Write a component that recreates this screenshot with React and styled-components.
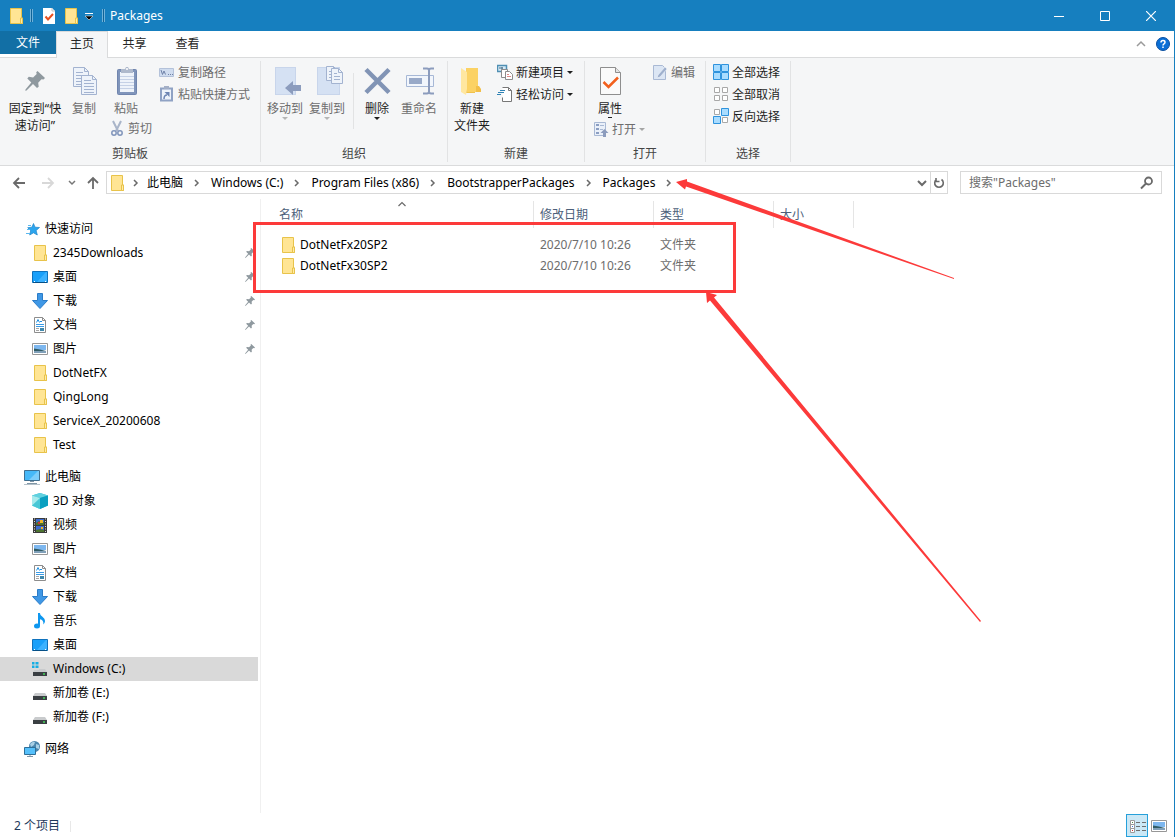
import React from "react"
import styled, { createGlobalStyle, css } from "styled-components"

const GlobalStyle = createGlobalStyle`
  * {
    box-sizing: border-box;
  }
  body {
    margin: 0;
    background: #fff;
  }
  body,
  button,
  input {
    font-family: "Noto Sans", "Noto Sans CJK SC", sans-serif;
    font-size: 12px;
    line-height: 17px;
  }
  button {
    margin: 0;
    padding: 0;
    border: 0;
    background: none;
    color: inherit;
  }
  svg {
    display: block;
    flex: none;
  }
`

const Window = styled.div`
  position: relative;
  display: flex;
  flex-direction: column;
  min-height: 100vh;
  color: #000;
`
const Body = styled.div`
  flex: 1;
  display: flex;
  flex-direction: column;
  border-right: 1px solid #167fbf;
`

/* title bar */
const TitleBar = styled.header`
  display: flex;
  align-items: center;
  height: 31px;
  padding: 0 1px 0 8px;
  background: #167fbf;
  color: #fff;
`
const TitleSeparator = styled.span`
  width: 3px;
  height: 13px;
  margin: 0 5px 0 6px;
  border-left: 1px solid #6fb2da;
  border-right: 1px solid #6fb2da;
  background: #0f6397;
`
const QuickButton = styled.button`
  display: flex;
  justify-content: center;
  align-items: center;
  width: ${props => (props.$narrow ? "14px" : "22px")};
  height: 31px;
`
const Title = styled.h1`
  flex: 1;
  margin: 0;
  font-size: 12px;
  font-weight: 400;
`
const WindowButton = styled.button`
  display: flex;
  justify-content: center;
  align-items: center;
  width: 46px;
  height: 31px;
`

/* ribbon */
const Tabs = styled.nav`
  display: flex;
  align-items: flex-start;
  height: 27px;
  border-bottom: 1px solid #dadbdc;
`
const Tab = styled.button`
  width: 53px;
  height: 25px;
  color: #262626;
  ${props =>
    props.$file &&
    css`
      width: 56px;
      height: 23px;
      background: #126fa5;
      color: #fff;
    `}
  ${props =>
    props.$active &&
    css`
      width: 52px;
      height: 27px;
      padding-bottom: 3px;
      border: 1px solid #dadbdc;
      border-width: 1px 1px 0;
      background: #f5f6f7;
    `}
`
const TabTools = styled.div`
  display: flex;
  align-items: center;
  gap: 10px;
  height: 26px;
  margin-left: auto;
  padding-right: 4px;
`
const Ribbon = styled.section`
  display: flex;
  height: 108px;
  padding: 3px 0;
  background: #f5f6f7;
  border-bottom: 1px solid #dadbdc;
`
const Group = styled.div`
  display: flex;
  flex-direction: column;
  border-right: 1px solid #e2e3e4;
`
const GroupBody = styled.div`
  display: flex;
  height: 84px;
  padding: ${props => props.$pad || "0 3px"};
`
const GroupName = styled.div`
  color: #444;
  text-align: center;
`
const Stack = styled.div`
  display: flex;
  flex-direction: column;
  align-items: flex-start;
  margin-left: ${props => props.$gap || "0"};
`
const LargeButton = styled.button`
  display: flex;
  flex-direction: column;
  align-items: center;
  align-self: flex-start;
  width: ${props => props.$width || "42px"};
  padding-top: 5px;
  white-space: nowrap;
  color: ${props => (props.disabled ? "#6d6d6d" : "#1e1e1e")};

  > svg:first-child {
    margin-bottom: 2px;
  }
`
const SmallButton = styled.button`
  display: flex;
  align-items: center;
  gap: 3px;
  height: 22px;
  padding: 0 3px;
  white-space: nowrap;
  color: ${props => (props.disabled ? "#6d6d6d" : "#1e1e1e")};
`
const RibbonDivider = styled.span`
  width: 1px;
  height: 56px;
  margin: 12px 2px 0 5px;
  background: #e2e3e4;
`

/* address bar */
const Navigation = styled.div`
  display: flex;
  align-items: center;
  padding: 5px 12px 5px 7px;
`
const NavButton = styled.button`
  display: flex;
  justify-content: center;
  width: ${props => (props.$narrow ? "18px" : "24px")};
  margin-right: ${props => props.$after || "0"};
`
const AddressBox = styled.div`
  flex: 1;
  display: flex;
  align-items: center;
  height: 23px;
  margin-right: 12px;
  padding-left: 2px;
  border: 1px solid #d9d9d9;
`
const Crumb = styled.a`
  color: #000;
  text-decoration: none;
  white-space: nowrap;
`
const CrumbArrow = styled.span`
  display: flex;
  justify-content: center;
  width: ${props => (props.$first ? "22px" : "28px")};
`
const AddressButton = styled.button`
  display: flex;
  justify-content: center;
  align-items: center;
  width: 17px;
  height: 21px;
  margin-left: ${props => (props.$push ? "auto" : "0")};
  border-left: ${props => (props.$line ? "1px solid #d9d9d9" : "0")};
`
const SearchBox = styled.label`
  display: flex;
  align-items: center;
  width: 202px;
  height: 23px;
  padding: 0 6px 0 8px;
  border: 1px solid #d9d9d9;
`
const SearchInput = styled.input`
  flex: 1;
  min-width: 0;
  padding: 0;
  border: 0;
  outline: 0;
  background: none;

  &::placeholder {
    color: #6d6d6d;
    opacity: 1;
  }
`

/* content */
const Content = styled.div`
  flex: 1;
  display: flex;
`
const Sidebar = styled.aside`
  width: 261px;
  padding: 18px 2px 0 0;
  border-right: 1px solid #f0f0f0;
`
const Tree = styled.ul`
  margin: 0 0 8px;
  padding: 0;
  list-style: none;
`
const TreeItem = styled.li`
  display: flex;
  align-items: center;
  height: 24px;
  padding: 0 3px 0 ${props => (props.$root ? "24px" : "32px")};
  background: ${props => (props.$selected ? "#d9d9d9" : "none")};
`
const TreeLink = styled.a`
  flex: 1;
  display: flex;
  align-items: center;
  gap: 5px;
  color: #000;
  text-decoration: none;
`
const TreeLabel = styled.span`
  padding-bottom: 1px;
`
const Files = styled.main`
  flex: 1;
  padding-top: 2px;
`
const FileTable = styled.table`
  border-collapse: separate;
  border-spacing: 0;
  table-layout: fixed;
  width: 593px;
`
const Column = styled.th`
  position: relative;
  width: ${props => props.$width};
  height: 27px;
  padding: 0 0 0 ${props => (props.$name ? "18px" : "6px")};
  border-right: 1px solid #e5e5e5;
  color: #4c607a;
  font-weight: 400;
  text-align: left;
`
const SortMark = styled.span`
  position: absolute;
  top: 0;
  left: 50%;
`
const Cell = styled.td`
  height: 21px;
  padding: 0 0 0 ${props => (props.$name ? "18px" : "6px")};
  color: ${props => (props.$name ? "#000" : "#6d6d6d")};
`
const Spacer = styled.tbody`
  td {
    height: 6px;
    padding: 0;
  }
`
const FileName = styled.div`
  display: flex;
  align-items: center;
  gap: 4px;
  padding-left: 1px;
`
const StatusBar = styled.footer`
  display: flex;
  align-items: center;
  height: 24px;
  padding: 0 4px 0 14px;
  color: #1e395b;
`
const StatusCount = styled.span`
  flex: 1;

  &::after {
    content: "";
    display: inline-block;
    height: 11px;
    margin-left: 10px;
    border-left: 1px solid #e8e8e8;
    vertical-align: middle;
  }
`
const ViewButton = styled.button`
  display: flex;
  justify-content: center;
  align-items: center;
  width: 22px;
  height: 23px;
  margin-top: 1px;
  ${props =>
    props.$active &&
    css`
      border: 1px solid #26a0da;
      background: #cbe8f6;
    `}
`
const Annotations = styled.svg`
  position: absolute;
  top: 0;
  left: 0;
  pointer-events: none;
`

/* drawings */
const Icon = ({ size = 16, height, children, ...rest }) => (
  <svg
    width={size}
    height={height || size}
    viewBox={`0 0 ${size} ${height || size}`}
    fill="none"
    aria-hidden="true"
    {...rest}
  >
    {children}
  </svg>
)

const Folder = () => (
  <Icon>
    <path d="M2.5.5h11v9.500h1v5.500h-12z" fill="#ffe594" stroke="#e8c34a" />
    <path d="M12.500 15.500v-5.500h2v5.500z" fill="#ffeba8" stroke="#e8c34a" />
  </Icon>
)
const CheckDoc = () => (
  <Icon>
    <path d="M2 0h9l3 3v13H2z" fill="#fff" />
    <path d="M11 0v3h3" stroke="#c5c5c5" />
    <path d="M4.500 8.500l2.500 3 5-5.500" stroke="#e8501f" strokeWidth="2" />
  </Icon>
)
const Caret = ({ color = "#1e1e1e", ...rest }) => (
  <Icon size={6} height={3} {...rest}>
    <path d="M0 0h6L3 3z" fill={color} />
  </Icon>
)
const Chevron = ({ d, color = "#6a6a6a", size = 10, width = 1.5 }) => (
  <Icon size={size}>
    <path d={d} stroke={color} strokeWidth={width} />
  </Icon>
)
const Page = ({ x, y, w, h, fill = "#eef3fa", stroke = "#a3b3d0", line = "#a3b3d0" }) => {
  const rows = []
  for (let i = 5; i < h - 2; i += 3) rows.push(i)
  return (
    <g transform={`translate(${x} ${y})`}>
      <path d={`M.5.5h${w - 5}l4 4v${h - 5}h${1 - w}z`} fill={fill} stroke={stroke} />
      <path d={`M${w - 4.5}.5v4h4`} stroke={stroke} />
      {rows.map(i => (
        <path key={i} d={`M3 ${i + 0.5}H${i < 5.5 ? w - 6 : w - 3}`} stroke={line} />
      ))}
    </g>
  )
}

const PinShape = ({ size = 20, ...rest }) => (
  <svg width={size} height={size} viewBox="0 0 20 20" aria-hidden="true" {...rest}>
    <path
      d="M12.500 0l7.500 7-1.500 1.500-2-.3-3.300 3.500.5 4-1.700 1.300-4-4L1.500 19.500.3 19.800l.2-1.400 5.800-7-4-4 1.500-1.600 4.300.6L11.700 3l-.5-1.800z"
      fill="#8f999f"
    />
  </svg>
)
const BigPin = () => (
  <Icon size={32}>
    <PinShape x="6" y="5" />
  </Icon>
)
const BigCopy = () => (
  <Icon size={32}>
    <Page x={5} y={1} w={16} h={20} />
    <Page x={13} y={9} w={16} h={20} />
  </Icon>
)
const BigPaste = () => (
  <Icon size={32}>
    <rect x="7.500" y="3.500" width="19" height="25" rx="1" fill="#8095bb" stroke="#7085ae" />
    <rect x="10" y="6" width="14" height="20" fill="#eef3fa" />
    <path d="M10 10.500h14M10 13.500h14M10 16.500h14M10 19.500h14M10 22.500h14" stroke="#c5d1e6" />
    <path d="M11 3h4l1-2h2l1 2h4v4H11z" fill="#aeb9cc" />
    <circle cx="17" cy="3" r="1" fill="#fff" />
  </Icon>
)
const BigMove = () => (
  <Icon size={32}>
    <rect x="6.500" y="1.500" width="20" height="27" fill="#d5e1f3" stroke="#c8d5eb" />
    <path d="M16 22l8-7v4h8v6h-8v4z" fill="#8c9cbd" />
  </Icon>
)
const BigCopyTo = () => (
  <Icon size={32}>
    <rect x="6.500" y="1.500" width="22" height="27" fill="#d5e1f3" stroke="#c8d5eb" />
    <Page x={15} y={0} w={12} h={15} />
    <Page x={20} y={2} w={12} h={16} />
  </Icon>
)
const BigDelete = () => (
  <Icon size={32}>
    <path d="M5 3.500l23 23M28 3.500l-23 23" stroke="#8194b5" strokeWidth="4.500" />
  </Icon>
)
const BigRename = () => (
  <Icon size={32}>
    <path d="M3.500 9.500h27v11h-27z" fill="#f2f6fc" stroke="#a7b8d6" />
    <path d="M6 12h13v6H6z" fill="#98a9c8" />
    <path d="M20 2.500h4q2 0 2 2 0-2 2-2h3M20 27.500h4q2 0 2-2 0 2 2 2h3M26 4v22" stroke="#8c9cbd" strokeWidth="2" />
  </Icon>
)
const BigFolder = () => (
  <Icon size={32}>
    <path d="M10 2h11l-2 1v24h-9z" fill="#f0c24e" />
    <path d="M10 2h12v18l2 3v3H11z" fill="#fbd264" />
    <path d="M20 20h3l2 3v3h-5z" fill="#f2bf49" />
    <path d="M5 2l6 4v17l-1 6-5-3z" fill="#ffe7a0" />
  </Icon>
)
const BigProperties = () => (
  <Icon size={32}>
    <path d="M6.500 1.500h15l5 5v22h-20z" fill="#fafafa" stroke="#8e8e8e" />
    <path d="M21.500 1.500v5h5" fill="#e4e4e4" stroke="#8e8e8e" />
    <path d="M9.500 16l5 5 9.500-9.500" stroke="#f2601d" strokeWidth="2.500" />
  </Icon>
)
const PathIcon = () => (
  <Icon>
    <path d="M.5 4.500h14v8H.5z" fill="#cfdcef" stroke="#b4c2da" />
    <path d="M2 6l1.500 4.500L5 7l1.500 3.500M9 10.500h1M11 10.500h1M13 10.500h1" stroke="#6f82a8" />
  </Icon>
)
const ShortcutIcon = () => (
  <Icon>
    <path d="M2 2.500h11v12H2z" fill="#eef3fa" stroke="#8fa2c4" strokeWidth="2" />
    <path d="M5 0h5v3H5z" fill="#a3afc6" />
    <path d="M5 13c0-3 1-4 3-4" stroke="#6c84b2" strokeWidth="1.500" />
    <path d="M5.500 6h5v5z" fill="#6c84b2" />
  </Icon>
)
const CutIcon = () => (
  <Icon>
    <path d="M4 1l5 10M12 1L7 11" stroke="#a9b5c9" strokeWidth="2" />
    <circle cx="5" cy="13" r="2.200" stroke="#8195bb" strokeWidth="1.500" />
    <circle cx="11" cy="13" r="2.200" stroke="#8195bb" strokeWidth="1.500" />
  </Icon>
)
const NewItemIcon = () => (
  <Icon>
    <path d="M.5 1.500h9v6h-9z" fill="#d5eaf6" stroke="#4f8fb3" strokeWidth="1.500" />
    <path d="M2 4h4M5 3v3" stroke="#4a6f88" />
    <path d="M4.500 5.500h6v8h-6z" fill="#fff" stroke="#8d8d8d" />
    <path d="M8.500 7.500h4l3 3v5h-7z" fill="#fff" stroke="#8d8d8d" />
    <path d="M10 10.500h2M10 12.500h4" stroke="#e08a8a" />
  </Icon>
)
const EasyIcon = () => (
  <Icon>
    <path d="M5.500 1.500h6l3 3v11h-9v-4" fill="#fff" stroke="#777" />
    <path d="M11.500 1.500v3h3" stroke="#777" />
    <path d="M3 4.500h5M1 6.500h6M0 8.500h4" stroke="#2f83b5" />
  </Icon>
)
const EditIcon = () => (
  <Icon>
    <path d="M1.500 1.500h9l3 3v11h-12z" fill="#dce6f4" stroke="#a9b9d4" />
    <path d="M5 14l1-3 7-8 2 2-7 8z" fill="#9fb0cd" stroke="#eef3fa" strokeWidth=".6" />
  </Icon>
)
const OpenIcon = () => (
  <Icon>
    <path d="M1.500 1.500h11v13h-11z" fill="#eaf0f9" stroke="#a9b9d4" />
    <path d="M3 3h3v2H3zM3 7h3v2H3zM3 11h3v2H3z" fill="#8b9ec2" />
    <path d="M7 4.500h4M7 8.500h3" stroke="#a9b9d4" />
    <path d="M11.500 8l4 4h-2.500v4h-3v-4H7.500z" fill="#8c9cbd" />
  </Icon>
)
const TILES = [[0, 0], [8, 0], [0, 8], [8, 8]]
const TileIcon = ({ on }) => (
  <Icon>
    {TILES.map(([x, y], i) =>
      on[i] ? (
        <path key={i} d={`M${x + 0.5} ${y + 0.5}h7v7h-7z`} fill="#a9dcff" stroke="#2f93dd" />
      ) : (
        <path key={i} d={`M${x + 1.5} ${y + 1.5}h5v5h-5z`} fill="#fff" stroke="#a8a8a8" />
      )
    )}
  </Icon>
)
const Star = () => (
  <Icon>
    <path d="M9.500 2.500l1.500 3.700 4.500.3-3.400 3 1.200 4.500-3.800-2.200L5.700 14l1-4.300-3-3 4.200-.5z" fill="#2ba5ee" stroke="#1b82c9" strokeWidth=".7" />
    <path d="M4 4.500h3M3 8.500h3M2 12.500h4" stroke="#5ab8ef" />
  </Icon>
)
const Desktop = () => (
  <Icon>
    <path d="M.5 2.500h15v11H.5z" fill="#19a0fa" stroke="#0f72bd" />
    <path d="M5 13l9-10h1v10z" fill="#3cb2ff" />
    <path d="M1 13.500h14" stroke="#064f86" />
    <path d="M2 12.500h1M13 12.500h1" stroke="#fff" />
  </Icon>
)
const Download = () => (
  <Icon>
    <path d="M5.500.5h5v7h5L8 15.500.5 7.500h5z" fill="#3f98e6" stroke="#2b7cc8" />
  </Icon>
)
const DocIcon = () => (
  <Icon>
    <path d="M2.500.5h8l3 3v12h-11z" fill="#fff" stroke="#8d8d8d" />
    <path d="M10.500.5v3h3" stroke="#8d8d8d" />
    <path d="M4.500 5.500l1.500-3 1.500 3M8 4.500h2" stroke="#1f8fe0" />
    <path d="M4 7.500h8M4 9.500h8" stroke="#3a9be6" />
    <path d="M4 11.500h3M4 13.500h3" stroke="#a5a5a5" />
    <path d="M8 11h4v3H8z" fill="#3f88ac" />
  </Icon>
)
const PictureIcon = () => (
  <Icon>
    <path d="M.5 2.500h15v11H.5z" fill="#fff" stroke="#979797" />
    <path d="M2 4h12v5H2z" fill="#7db7ef" />
    <path d="M2 7.500q6 .5 12 2.500H2z" fill="#315c66" />
    <path d="M2 10h12v2H2z" fill="#7f9fb8" />
  </Icon>
)
const Monitor = () => (
  <Icon>
    <path d="M.5 1.500h15v10H.5z" fill="#46b8f8" stroke="#406f90" />
    <path d="M5 11l9-9h1v9z" fill="#7ccdfb" />
    <path d="M6 12.500h4M3 14.500h10" stroke="#8096a6" />
    <path d="M0 15.500h16" stroke="#b4c1ca" />
  </Icon>
)
const Cube = () => (
  <Icon>
    <path d="M8 0l8 2.500v10L8 16 0 12.500v-10z" fill="#27b8d2" />
    <path d="M0 2.500L8 0l8 2.500L8 5z" fill="#61d1df" />
    <path d="M0 2.500L8 5v11l-8-3.500z" fill="#a7eaec" />
    <path d="M0 12.500L8 5v11z" fill="#48c7d6" />
    <path d="M8 5l8-2.500v10L8 16z" fill="#0a9fc0" />
  </Icon>
)
const Video = () => (
  <Icon>
    <path d="M1 1h14v15H1z" fill="#3b3b3b" />
    <path d="M2.500 1.500v14M13.500 1.500v14" stroke="#ddd" strokeDasharray="1 1.500" />
    <path d="M4 2h8v6H4zM4 9h8v6H4z" fill="#3c6bd0" />
    <path d="M4 6l3-2 5 1v3H4zM4 13l4-1 4 1v2H4z" fill="#4d7430" />
    <path d="M8 3h3v3H8zM9 10h2v2H9z" fill="#f0b628" />
    <path d="M6 5h2v2H6z" fill="#c93838" />
  </Icon>
)
const Music = () => (
  <Icon>
    <ellipse cx="5" cy="13" rx="3" ry="2.500" fill="#0e97ef" />
    <path d="M6 13V0h2c0 3.500 5 4 5 8 0 1.500-.8 2.500-1.800 3.500.9-3-1-5-3.200-5.300V13z" fill="#0e97ef" />
  </Icon>
)
const Drive = ({ system }) => (
  <Icon>
    <path d="M3 8h10l2 3H1z" fill="#c9cbcd" />
    <path d="M1 11h14v4H1z" fill="#3a3f43" />
    <path d="M11 13h2" stroke="#44d659" strokeWidth="1.500" />
    {system && (
      <>
        <path d="M0 0h7v9H0z" fill="#d9d9d9" />
        <path d="M0 1h2.500v2.500H0zM3.500 1h3v2.500h-3zM0 4.500h2.500V7H0zM3.500 4.500h3V7h-3z" fill="#16aee4" />
      </>
    )}
  </Icon>
)
const Network = () => (
  <Icon>
    <circle cx="10.500" cy="5.500" r="5.500" fill="#4b86ad" />
    <path d="M6 3q3-3 5-2l-1 3-3 2zM12 3l3 1v4l-3-1z" fill="#a9d0e6" />
    <path d="M.5 6.500h11v7H.5z" fill="#55c0fb" stroke="#2f6f98" />
    <path d="M3 15.500h6M6 14v1" stroke="#8096a6" />
  </Icon>
)
const DetailsIcon = () => (
  <Icon size={18}>
    <path d="M2.500 3.500h4v4h-4zM2.500 7.500h4v4h-4zM2.500 11.500h4v4h-4z" fill="#fff" stroke="#9b9b9b" />
    <path d="M4 5.500h1" stroke="#4b8b4b" />
    <path d="M4 9.500h1" stroke="#3b78d8" />
    <path d="M4 13.500h1" stroke="#d03030" />
    <path d="M8 5.500h4M14 5.500h4M8 9.500h4M14 9.500h4M8 13.500h4M14 13.500h4" stroke="#6f6f6f" />
  </Icon>
)

const crumbs = ["此电脑", "Windows (C:)", "Program Files (x86)", "BootstrapperPackages", "Packages"]

const tree = [
  {
    name: "快速访问",
    icon: <Star />,
    items: [
      { name: "2345Downloads", icon: <Folder />, pinned: true },
      { name: "桌面", icon: <Desktop />, pinned: true },
      { name: "下载", icon: <Download />, pinned: true },
      { name: "文档", icon: <DocIcon />, pinned: true },
      { name: "图片", icon: <PictureIcon />, pinned: true },
      { name: "DotNetFX", icon: <Folder /> },
      { name: "QingLong", icon: <Folder /> },
      { name: "ServiceX_20200608", icon: <Folder /> },
      { name: "Test", icon: <Folder /> },
    ],
  },
  {
    name: "此电脑",
    icon: <Monitor />,
    items: [
      { name: "3D 对象", icon: <Cube /> },
      { name: "视频", icon: <Video /> },
      { name: "图片", icon: <PictureIcon /> },
      { name: "文档", icon: <DocIcon /> },
      { name: "下载", icon: <Download /> },
      { name: "音乐", icon: <Music /> },
      { name: "桌面", icon: <Desktop /> },
      { name: "Windows (C:)", icon: <Drive system />, selected: true },
      { name: "新加卷 (E:)", icon: <Drive /> },
      { name: "新加卷 (F:)", icon: <Drive /> },
    ],
  },
  { name: "网络", icon: <Network />, items: [] },
]

const files = [
  { name: "DotNetFx20SP2", date: "2020/7/10 10:26", type: "文件夹" },
  { name: "DotNetFx30SP2", date: "2020/7/10 10:26", type: "文件夹" },
]

const Header = () => (
  <TitleBar>
    <Folder />
    <TitleSeparator />
    <QuickButton aria-label="属性">
      <CheckDoc />
    </QuickButton>
    <QuickButton aria-label="新建文件夹">
      <Folder />
    </QuickButton>
    <QuickButton $narrow aria-label="自定义快速访问工具栏">
      <Icon size={8}>
        <path d="M0 1.500h8" stroke="#fff" />
        <path d="M0 4h8L4 8z" fill="#000" stroke="#fff" strokeWidth=".5" />
      </Icon>
    </QuickButton>
    <TitleSeparator />
    <Title>Packages</Title>
    <WindowButton aria-label="最小化">
      <Icon size={10}>
        <path d="M0 5.500h10" stroke="#fff" />
      </Icon>
    </WindowButton>
    <WindowButton aria-label="最大化">
      <Icon size={10}>
        <path d="M.5.5h9v9h-9z" stroke="#fff" />
      </Icon>
    </WindowButton>
    <WindowButton aria-label="关闭">
      <Icon size={10}>
        <path d="M0 0l10 10M10 0L0 10" stroke="#fff" strokeWidth="1.200" />
      </Icon>
    </WindowButton>
  </TitleBar>
)

const RibbonTabs = () => (
  <Tabs>
    <Tab $file>文件</Tab>
    <Tab $active>主页</Tab>
    <Tab>共享</Tab>
    <Tab>查看</Tab>
    <TabTools>
      <Chevron d="M1 7l4-4 4 4" color="#9a9a9a" />
      <Icon size={14}>
        <circle cx="7" cy="7" r="6.500" fill="#0a6fd6" stroke="#0b4fa0" />
        <path d="M5 5.500q0-2 2-2t2 1.700q0 1-1 1.600T7 8.500M7 9.500v1.500" stroke="#fff" strokeWidth="1.500" />
      </Icon>
    </TabTools>
  </Tabs>
)

const RibbonBar = () => (
  <Ribbon>
    <Group>
      <GroupBody $pad="0 7px 0 4px">
        <LargeButton $width="62px">
          <BigPin />
          <span>固定到“快</span>
          <span>速访问”</span>
        </LargeButton>
        <LargeButton $width="36px" disabled>
          <BigCopy />
          <span>复制</span>
        </LargeButton>
        <Stack $gap="4px">
          <LargeButton $width="40px" disabled>
            <BigPaste />
            <span>粘贴</span>
          </LargeButton>
          <SmallButton disabled>
            <CutIcon />
            <span>剪切</span>
          </SmallButton>
        </Stack>
        <Stack $gap="1px">
          <SmallButton disabled>
            <PathIcon />
            <span>复制路径</span>
          </SmallButton>
          <SmallButton disabled>
            <ShortcutIcon />
            <span>粘贴快捷方式</span>
          </SmallButton>
        </Stack>
      </GroupBody>
      <GroupName>剪贴板</GroupName>
    </Group>
    <Group>
      <GroupBody $pad="0 7px 0 3px">
        <LargeButton disabled>
          <BigMove />
          <span>移动到</span>
          <Caret color="#b5b5b5" />
        </LargeButton>
        <LargeButton disabled>
          <BigCopyTo />
          <span>复制到</span>
          <Caret color="#b5b5b5" />
        </LargeButton>
        <RibbonDivider />
        <LargeButton>
          <BigDelete />
          <span>删除</span>
          <Caret />
        </LargeButton>
        <LargeButton disabled>
          <BigRename />
          <span>重命名</span>
        </LargeButton>
      </GroupBody>
      <GroupName>组织</GroupName>
    </Group>
    <Group>
      <GroupBody $pad="0 8px 0 3px">
        <LargeButton>
          <BigFolder />
          <span>新建</span>
          <span>文件夹</span>
        </LargeButton>
        <Stack $gap="1px">
          <SmallButton>
            <NewItemIcon />
            <span>新建项目</span>
            <Caret />
          </SmallButton>
          <SmallButton>
            <EasyIcon />
            <span>轻松访问</span>
            <Caret />
          </SmallButton>
        </Stack>
      </GroupBody>
      <GroupName>新建</GroupName>
    </Group>
    <Group>
      <GroupBody $pad="0 7px 0 5px">
        <Stack>
          <LargeButton $width="40px">
            <BigProperties />
            <span>属性</span>
            <Icon size={4} height={1}>
              <path d="M0 .5h4" stroke="#1e1e1e" />
            </Icon>
          </LargeButton>
          <SmallButton disabled>
            <OpenIcon />
            <span>打开</span>
            <Caret color="#a5a5a5" />
          </SmallButton>
        </Stack>
        <Stack $gap="1px">
          <SmallButton disabled>
            <EditIcon />
            <span>编辑</span>
          </SmallButton>
        </Stack>
      </GroupBody>
      <GroupName>打开</GroupName>
    </Group>
    <Group>
      <GroupBody $pad="0 7px 0 4px">
        <Stack>
          <SmallButton>
            <TileIcon on={[1, 1, 1, 1]} />
            <span>全部选择</span>
          </SmallButton>
          <SmallButton>
            <TileIcon on={[0, 0, 0, 0]} />
            <span>全部取消</span>
          </SmallButton>
          <SmallButton>
            <TileIcon on={[0, 1, 1, 0]} />
            <span>反向选择</span>
          </SmallButton>
        </Stack>
      </GroupBody>
      <GroupName>选择</GroupName>
    </Group>
  </Ribbon>
)

const AddressBar = () => (
  <Navigation>
    <NavButton $after="5px" aria-label="后退">
      <Icon size={14}>
        <path d="M13 7H2M7 2L2 7l5 5" stroke="#6a6a6a" strokeWidth="1.800" />
      </Icon>
    </NavButton>
    <NavButton $after="3px" aria-label="前进">
      <Icon size={14}>
        <path d="M1 7h11M7 2l5 5-5 5" stroke="#d8d8d8" strokeWidth="1.800" />
      </Icon>
    </NavButton>
    <NavButton $narrow aria-label="最近浏览的位置">
      <Chevron d="M2 3l3 3 3-3" color="#777" />
    </NavButton>
    <NavButton $after="1px" aria-label="上移">
      <Icon size={14}>
        <path d="M7 13V2M2 7l5-5 5 5" stroke="#6a6a6a" strokeWidth="1.800" />
      </Icon>
    </NavButton>
    <AddressBox>
      <Folder />
      <CrumbArrow $first>
        <Chevron d="M3 2l3 3-3 3" />
      </CrumbArrow>
      {crumbs.map(name => (
        <React.Fragment key={name}>
          <Crumb href="#">{name}</Crumb>
          <CrumbArrow>
            <Chevron d="M3 2l3 3-3 3" />
          </CrumbArrow>
        </React.Fragment>
      ))}
      <AddressButton $push aria-label="以前的位置">
        <Chevron d="M1 3l4 4 4-4" width={2} />
      </AddressButton>
      <AddressButton $line aria-label="刷新">
        <Icon size={12}>
          <path d="M8.500 2.500a4.300 4.300 0 1 1-5 0M3 1v3.500h3.500" stroke="#6a6a6a" strokeWidth="1.600" />
        </Icon>
      </AddressButton>
    </AddressBox>
    <SearchBox>
      <SearchInput type="search" aria-label="搜索" placeholder={'搜索"Packages"'} />
      <Icon>
        <circle cx="9.500" cy="6" r="3.500" stroke="#6a6a6a" strokeWidth="1.800" />
        <path d="M7 8.500l-5 5" stroke="#6a6a6a" strokeWidth="2" />
      </Icon>
    </SearchBox>
  </Navigation>
)

const NavTree = () => (
  <Sidebar>
    {tree.map(root => (
      <Tree key={root.name}>
        <TreeItem $root>
          <TreeLink href="#">
            {root.icon}
            <TreeLabel>{root.name}</TreeLabel>
          </TreeLink>
        </TreeItem>
        {root.items.map(item => (
          <TreeItem key={item.name} $selected={item.selected}>
            <TreeLink href="#">
              {item.icon}
              <TreeLabel>{item.name}</TreeLabel>
            </TreeLink>
            {item.pinned && <PinShape size={10} />}
          </TreeItem>
        ))}
      </Tree>
    ))}
  </Sidebar>
)

const FileList = () => (
  <Files>
    <FileTable>
      <thead>
        <tr>
          <Column $name $width="273px">
            名称
            <SortMark>
              <Chevron d="M1.500 5L5 1.500 8.500 5" width={1.2} />
            </SortMark>
          </Column>
          <Column $width="120px">修改日期</Column>
          <Column $width="120px">类型</Column>
          <Column $width="80px">大小</Column>
        </tr>
      </thead>
      <Spacer>
        <tr>
          <td colSpan={4} />
        </tr>
      </Spacer>
      <tbody>
        {files.map(file => (
          <tr key={file.name}>
            <Cell $name>
              <FileName>
                <Folder />
                {file.name}
              </FileName>
            </Cell>
            <Cell>{file.date}</Cell>
            <Cell>{file.type}</Cell>
            <Cell />
          </tr>
        ))}
      </tbody>
    </FileTable>
  </Files>
)

const App = () => (
  <Window>
    <GlobalStyle />
    <Header />
    <Body>
      <RibbonTabs />
      <RibbonBar />
      <AddressBar />
      <Content>
        <NavTree />
        <FileList />
      </Content>
      <StatusBar>
        <StatusCount>2 个项目</StatusCount>
        <ViewButton $active aria-label="详细信息">
          <DetailsIcon />
        </ViewButton>
        <ViewButton aria-label="大图标">
          <PictureIcon />
        </ViewButton>
      </StatusBar>
    </Body>
    <Annotations width="982" height="623" aria-hidden="true">
      <rect x="254.500" y="223.500" width="480" height="68" fill="none" stroke="#fc3a3a" strokeWidth="3" />
      <path d="M676 182l11-3 0 2.500L954 278l0 1L686 186.500l-1 3z" fill="#fc3a3a" />
      <path d="M706 292l11 3-3 2.500L981 621l-1 1L710 300.500l-3 2.500z" fill="#fc3a3a" />
    </Annotations>
  </Window>
)

export default App
